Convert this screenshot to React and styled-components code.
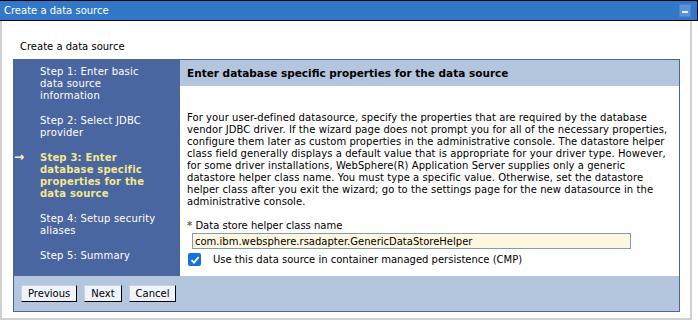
import React from 'react';
import styled, { createGlobalStyle } from 'styled-components';

const Global = createGlobalStyle`
  html, body { margin: 0; padding: 0; background: #fff; }
  body { font-family: "DejaVu Sans", Verdana, sans-serif; font-size: 10px; color: #000; }
`;

const steps = [
  { lines: ['Step 1: Enter basic', 'data source', 'information'] },
  { lines: ['Step 2: Select JDBC', 'provider'] },
  { lines: ['Step 3: Enter', 'database specific', 'properties for the', 'data source'], current: true },
  { lines: ['Step 4: Setup security', 'aliases'] },
  { lines: ['Step 5: Summary'] },
];

const help = [
  'For your user-defined datasource, specify the properties that are required by the database',
  'vendor JDBC driver. If the wizard page does not prompt you for all of the necessary properties,',
  'configure them later as custom properties in the administrative console. The datastore helper',
  'class field generally displays a default value that is appropriate for your driver type. However,',
  'for some driver installations, WebSphere(R) Application Server supplies only a generic',
  'datastore helper class name. You must type a specific value. Otherwise, set the datastore',
  'helper class after you exit the wizard; go to the settings page for the new datasource in the',
  'administrative console.',
];

export default function App() {
  return (
    <>
      <Global />
      <Window>
        <TitleBar>
          <span>Create a data source</span>
          <MinButton />
        </TitleBar>
        <Body>
          <PageTitle>Create a data source</PageTitle>
          <Wizard>
            <Nav>
              {steps.map((s) => (
                <Step key={s.lines[0]} current={s.current ? 1 : 0}>
                  {s.current && <Arrow>→</Arrow>}
                  {s.lines.map((l) => (
                    <div key={l}>{l}</div>
                  ))}
                </Step>
              ))}
            </Nav>
            <Content>
              <Header>Enter database specific properties for the data source</Header>
              <Text>
                {help.map((l) => (
                  <div key={l}>{l}</div>
                ))}
              </Text>
              <Field>
                <Label><Req>*</Req> Data store helper class name</Label>
                <Input defaultValue="com.ibm.websphere.rsadapter.GenericDataStoreHelper" />
              </Field>
              <CheckRow>
                <Check>
                  <svg width="10" height="10" viewBox="0 0 10 10">
                    <path d="M1.5 5.2 L4 7.6 L8.6 2.2" fill="none" stroke="#fff" strokeWidth="1.8" />
                  </svg>
                </Check>
                <span>Use this data source in container managed persistence (CMP)</span>
              </CheckRow>
            </Content>
            <Footer>
              <Button>Previous</Button>
              <Button>Next</Button>
              <Button>Cancel</Button>
            </Footer>
          </Wizard>
        </Body>
      </Window>
    </>
  );
}

const Window = styled.div`
  width: 698px;
  height: 324px;
  display: flex;
  flex-direction: column;
`;

const TitleBar = styled.div`
  height: 21px;
  box-sizing: border-box;
  background: #3278c8;
  border: 1px solid #000;
  border-left: none;
  color: #fff;
  font-size: 10px;
  display: flex;
  align-items: center;
  justify-content: space-between;
  padding: 0 6px 0 4px;
`;

const MinButton = styled.div`
  width: 10px;
  height: 11px;
  background: #5b93d6;
  border: 1px solid #4a86cf;
  position: relative;
  &::after {
    content: '';
    position: absolute;
    left: 2px;
    right: 2px;
    bottom: 3px;
    height: 2px;
    background: #e8f0fa;
  }
`;

const Body = styled.div`
  width: 692px;
  height: 299px;
  box-sizing: border-box;
  border: 2px solid #d0d0d0;
  border-top: none;
  padding: 0 0 0 11px;
`;

const PageTitle = styled.div`
  font-size: 10px;
  padding: 20px 0 0 7px;
  height: 18px;
`;

const Wizard = styled.div`
  width: 667px;
  box-sizing: border-box;
  border: 1px solid #4a66a0;
  display: grid;
  grid-template-columns: 166px 1fr;
`;

const Nav = styled.div`
  background: #4a66a0;
  padding: 6px 0 0 26px;
  display: flex;
  flex-direction: column;
  gap: 13px;
`;

const Step = styled.div`
  position: relative;
  color: ${(p) => (p.current ? '#f5e78a' : '#fff')};
  font-weight: ${(p) => (p.current ? 'bold' : 'normal')};
  font-size: 10px;
  letter-spacing: 0.2px;
  line-height: 12px;
  white-space: nowrap;
`;

const Arrow = styled.span`
  position: absolute;
  left: -26px;
  top: -1px;
  font-size: 12px;
  font-weight: bold;
  color: #f4f0c8;
`;

const Content = styled.div`
  display: flex;
  flex-direction: column;
  padding-bottom: 10px;
`;

const Header = styled.div`
  background: #b4c5de;
  font-weight: bold;
  font-size: 10.5px;
  height: 26px;
  line-height: 26px;
  padding-left: 7px;
`;

const Text = styled.div`
  margin: 26px 0 0 7px;
  line-height: 12px;
  font-size: 10px;
  letter-spacing: 0.07px;
  white-space: nowrap;
`;

const Field = styled.div`
  margin: 12px 0 0 7px;
`;

const Label = styled.div`
  line-height: 12px;
`;

const Req = styled.span`
  color: #7a6a1a;
  font-weight: bold;
`;

const Input = styled.input`
  display: block;
  margin: 1px 0 0 5px;
  width: 439px;
  height: 16px;
  box-sizing: border-box;
  border: 1px solid #7f9db9;
  background: #fff8e1;
  font-family: inherit;
  font-size: 10px;
  padding: 0 2px;
  outline: none;
`;

const CheckRow = styled.div`
  display: flex;
  align-items: center;
  gap: 12px;
  margin: 4px 0 0 8px;
`;

const Check = styled.span`
  width: 13px;
  height: 13px;
  border-radius: 2px;
  background: #1a6fe0;
  display: flex;
  align-items: center;
  justify-content: center;
`;

const Footer = styled.div`
  grid-column: 1 / -1;
  background: #b4c5de;
  height: 35px;
  display: flex;
  align-items: center;
  gap: 6px;
  padding-left: 7px;
`;

const Button = styled.button`
  font-family: inherit;
  font-size: 10px;
  background: #eef3fc;
  border: 1px solid #000;
  border-top-color: #c8d0dc;
  border-left-color: #c8d0dc;
  height: 17px;
  padding: 0 6px;
  margin-right: 1px;
`;
